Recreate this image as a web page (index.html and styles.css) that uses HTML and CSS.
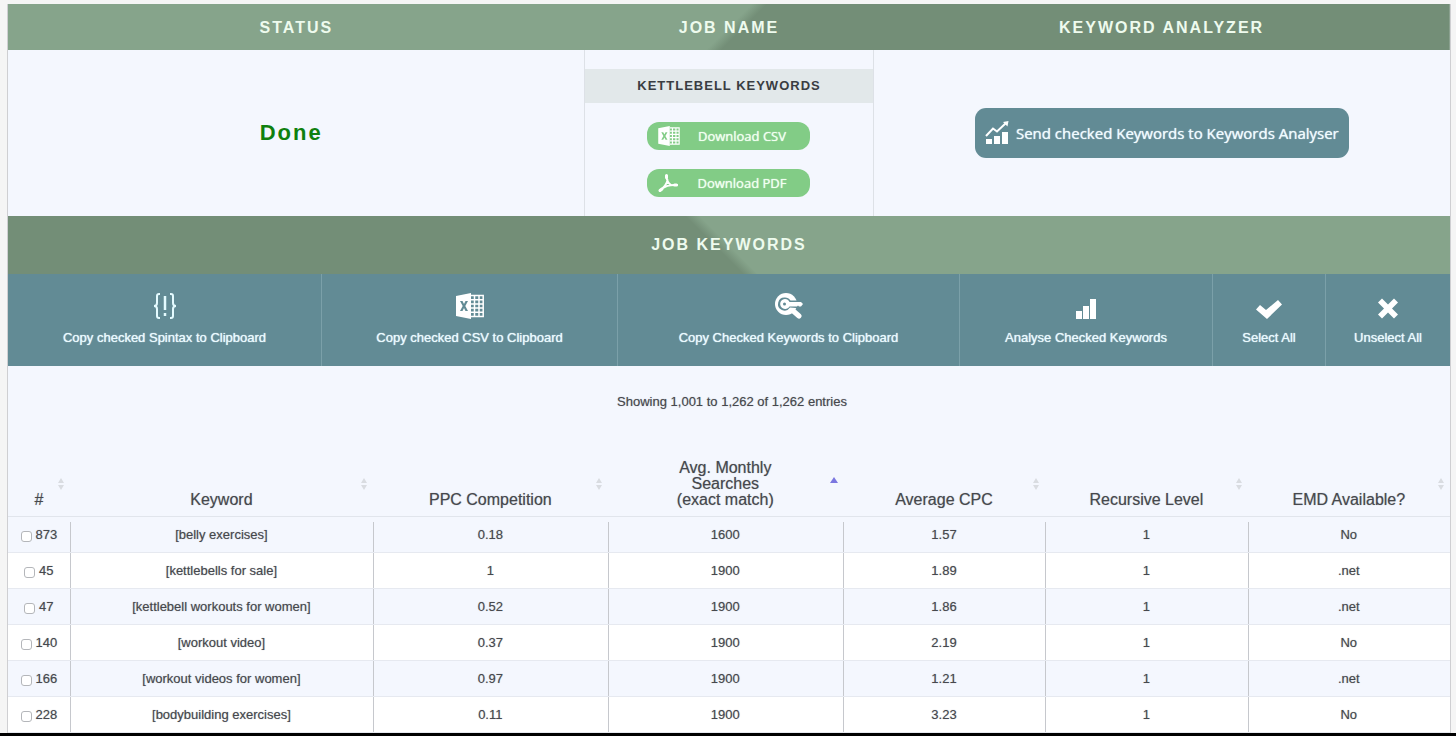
FILE: index.html
```html
<!DOCTYPE html>
<html lang="en">
<head>
  <meta charset="UTF-8" />
  <meta name="viewport" content="width=device-width, initial-scale=1.0"/>
  <title>Job Keywords</title>
  <link rel="stylesheet" href="styles.css">
</head>
<body>

  <!-- Shared icons -->
  <svg class="icon-defs" width="0" height="0" aria-hidden="true">
    <symbol id="icon-excel" viewBox="0 0 28 26">
      <path fill="#fff" fill-rule="evenodd" d="M0 3 15 0V26L0 23ZM4 8 6.700 13 4 18H6.500L8 15 9.500 18H12L9.300 13 12 8H9.500L8 11 6.500 8Z"/>
      <path fill="none" stroke="#fff" stroke-width="1.500" d="M15 2.500H27.200V23.500H15M15 6.700H27M15 10.900H27M15 15.100H27M15 19.300H27M18.500 3V23M23 3V23"/>
    </symbol>
    <symbol id="icon-sort" viewBox="0 0 8 14">
      <path fill="#d9dce1" d="M4 1 7 6H1ZM4 13 7 8H1Z"/>
    </symbol>
    <symbol id="icon-sort-asc" viewBox="0 0 8 14">
      <path fill="#7b77e0" d="M4 0 8 6H0Z"/>
    </symbol>
  </svg>

  <main class="panel">

    <!-- Job summary -->
    <table class="summary">
      <thead>
        <tr>
          <th class="col-status">Status</th>
          <th class="col-name">Job Name</th>
          <th class="col-analyzer">Keyword Analyzer</th>
        </tr>
      </thead>
      <tbody>
        <tr>
          <td class="status">Done</td>
          <td class="job">
            <h3>Kettlebell Keywords</h3>
            <button class="download-btn">
              <svg width="24" height="20"><use href="#icon-excel"/></svg>
              <span>Download CSV</span>
            </button>
            <button class="download-btn">
              <svg width="24" height="20" viewBox="0 0 24 20" fill="none" stroke="#fff" stroke-linecap="round" stroke-linejoin="round">
                <path stroke-width="3" d="M9.500 2.500V4.500M3 17.500 5 16M17.500 12H19.500"/>
                <path stroke-width="2" d="M9.500 3C9.500 7 11 10 14 12M10.500 7C10 11 6 15 3 17.500M5 15.500C9 12.500 14 11.500 20 12"/>
              </svg>
              <span>Download PDF</span>
            </button>
          </td>
          <td>
            <button class="send-btn">
              <svg width="24" height="24" viewBox="0 0 24 24">
                <path fill="#fff" d="M1 18H7V23H1ZM9 15H15V23H9ZM17 11H23V23H17Z"/>
                <path fill="none" stroke="#fff" stroke-width="2" d="M1 15 8 7.500 12 10.500 21 2"/>
                <path fill="#fff" d="M18 1 23.500 0 22.500 5.500Z"/>
              </svg>
              <span>Send checked Keywords to Keywords Analyser</span>
            </button>
          </td>
        </tr>
      </tbody>
    </table>

    <h2 class="section-title">Job Keywords</h2>

    <!-- Toolbar -->
    <div class="toolbar">
      <button>
        <svg width="24" height="26" viewBox="0 0 24 26" fill="none" stroke="#e4fbff" stroke-width="2">
          <path d="M7 1H6Q4 1 4 3V10Q4 13 1 13Q4 13 4 16V23Q4 25 6 25H7M17 1H18Q20 1 20 3V10Q20 13 23 13Q20 13 20 16V23Q20 25 18 25H17"/>
          <path stroke-width="2.500" d="M12 3V17M12 20V23"/>
        </svg>
        <span>Copy checked Spintax to Clipboard</span>
      </button>
      <button>
        <svg width="28" height="26"><use href="#icon-excel"/></svg>
        <span>Copy checked CSV to Clipboard</span>
      </button>
      <button>
        <!-- magnifier with a key laid over the lens -->
        <svg width="28" height="26" viewBox="0 0 28 26">
          <circle cx="11" cy="11" r="11" fill="#fff"/>
          <path stroke="#fff" stroke-width="5" stroke-linecap="round" d="M16 16 24 23"/>
          <path fill="#628b95" d="M10 4.500A6.500 6.500 0 0 1 15.500 7.500H28V15H21L15 14.500A6.500 6.500 0 1 1 10 4.500Z"/>
          <path fill="#fff" fill-rule="evenodd" d="M10 6A5 5 0 0 1 14.500 9H26L28 11 26 13.500H24L23 12.500 22 13.500H14.500A5 5 0 1 1 10 6ZM9.500 9.500A1.500 1.500 0 1 0 9.500 12.500A1.500 1.500 0 1 0 9.500 9.500Z"/>
        </svg>
        <span>Copy Checked Keywords to Clipboard</span>
      </button>
      <button>
        <svg width="20" height="26" viewBox="0 0 20 26">
          <path fill="#fff" d="M0 18H6V26H0ZM7 13H13V26H7ZM14 6H20V26H14Z"/>
        </svg>
        <span>Analyse Checked Keywords</span>
      </button>
      <button>
        <svg width="26" height="26" viewBox="0 0 26 26">
          <path fill="#fff" d="M4 12 10 17 22 7 26 11.500 11 26 0 16.500Z"/>
        </svg>
        <span>Select All</span>
      </button>
      <button>
        <svg width="22" height="26" viewBox="0 0 22 26">
          <path fill="#fff" d="M5 5.500 11 11.500 17 5.500 21 9.500 15 15.500 21 21.500 17 25.500 11 19.500 5 25.500 1 21.500 7 15.500 1 9.500Z"/>
        </svg>
        <span>Unselect All</span>
      </button>
    </div>

    <p class="table-info">Showing 1,001 to 1,262 of 1,262 entries</p>

    <!-- Keywords table -->
    <table class="keywords">
      <colgroup>
        <col class="c-id"><col class="c-keyword"><col class="c-wide"><col class="c-wide"><col><col><col>
      </colgroup>
      <thead>
        <tr>
          <th><button><span>#</span><svg><use href="#icon-sort"/></svg></button></th>
          <th><button><span>Keyword</span><svg><use href="#icon-sort"/></svg></button></th>
          <th><button><span>PPC Competition</span><svg><use href="#icon-sort"/></svg></button></th>
          <th><button><span>Avg. Monthly<br>Searches<br>(exact match)</span><svg><use href="#icon-sort-asc"/></svg></button></th>
          <th><button><span>Average CPC</span><svg><use href="#icon-sort"/></svg></button></th>
          <th><button><span>Recursive Level</span><svg><use href="#icon-sort"/></svg></button></th>
          <th><button><span>EMD Available?</span><svg><use href="#icon-sort"/></svg></button></th>
        </tr>
      </thead>
      <tbody>
        <tr>
          <td><label><input type="checkbox"> 873</label></td>
          <td>[belly exercises]</td>
          <td>0.18</td>
          <td>1600</td>
          <td>1.57</td>
          <td>1</td>
          <td>No</td>
        </tr>
        <tr>
          <td><label><input type="checkbox"> 45</label></td>
          <td>[kettlebells for sale]</td>
          <td>1</td>
          <td>1900</td>
          <td>1.89</td>
          <td>1</td>
          <td>.net</td>
        </tr>
        <tr>
          <td><label><input type="checkbox"> 47</label></td>
          <td>[kettlebell workouts for women]</td>
          <td>0.52</td>
          <td>1900</td>
          <td>1.86</td>
          <td>1</td>
          <td>.net</td>
        </tr>
        <tr>
          <td><label><input type="checkbox"> 140</label></td>
          <td>[workout video]</td>
          <td>0.37</td>
          <td>1900</td>
          <td>2.19</td>
          <td>1</td>
          <td>No</td>
        </tr>
        <tr>
          <td><label><input type="checkbox"> 166</label></td>
          <td>[workout videos for women]</td>
          <td>0.97</td>
          <td>1900</td>
          <td>1.21</td>
          <td>1</td>
          <td>.net</td>
        </tr>
        <tr>
          <td><label><input type="checkbox"> 228</label></td>
          <td>[bodybuilding exercises]</td>
          <td>0.11</td>
          <td>1900</td>
          <td>3.23</td>
          <td>1</td>
          <td>No</td>
        </tr>
      </tbody>
    </table>

  </main>

  <div class="bottom-bar"></div>

</body>
</html>
```
FILE: styles.css
```css
/* Reset & Base */
* {
  box-sizing: border-box;
  margin: 0;
  padding: 0;
}

body {
  font-family: "Liberation Sans", Arial, sans-serif;
  font-size: 13px;
  line-height: 16px;
  color: #46484d;
  background-color: #f5f5f5;
  padding-top: 4px;
}

button {
  border: none;
  background: none;
  color: inherit;
  font: inherit;
  cursor: pointer;
}

table {
  width: 100%;
  border-collapse: collapse;
  table-layout: fixed;
}

.icon-defs {
  display: block;
}

.panel {
  margin: 0 5px 0 7px;
  border-left: 1px solid #cfcfd2;
  border-right: 1px solid #cfcfd2;
  background-color: #f4f7fe;
}

/* Summary */
.summary thead tr {
  background: linear-gradient(135deg, #86a48b 50%, #738e77 51%);
}

.summary th {
  height: 46px;
  padding-top: 2px;
  font-size: 16px;
  letter-spacing: 2px;
  text-transform: uppercase;
  color: #eefbee;
}

.col-status,
.col-analyzer {
  width: 40%;
}

.col-name {
  width: 20%;
}

.summary td {
  height: 166px;
  text-align: center;
}

.summary .status {
  padding-right: 10px;
  font-size: 22px;
  font-weight: bold;
  letter-spacing: 2px;
  color: #0f800f;
}

.summary .job {
  border-left: 1px solid #dde1e7;
  border-right: 1px solid #dde1e7;
}

.job h3 {
  margin-bottom: 19px;
  font-size: 13px;
  line-height: 34px;
  letter-spacing: 1px;
  text-transform: uppercase;
  color: #3a3d42;
  background-color: #e2e8ea;
}

.download-btn {
  display: flex;
  align-items: center;
  width: 163px;
  height: 28px;
  margin: 0 auto;
  padding: 0 10px;
  border-radius: 12px;
  font-family: "Open Sans", sans-serif;
  font-weight: 500;
  color: #f1fff1;
  text-shadow: 0 0 1px #f1fff1;
  background-color: #82cc86;
}

.download-btn + .download-btn {
  margin-top: 19px;
}

.download-btn span {
  flex: 1;
  padding-left: 2px;
}

.send-btn {
  display: inline-flex;
  align-items: center;
  gap: 7px;
  height: 50px;
  padding: 0 10px;
  border-radius: 11px;
  font-family: "Open Sans", sans-serif;
  font-size: 15px;
  color: #f0fbff;
  text-shadow: 0 0 1px #f0fbff;
  background-color: #628b95;
}

/* Section title */
.section-title {
  font-size: 16px;
  line-height: 58px;
  letter-spacing: 2px;
  text-align: center;
  text-transform: uppercase;
  color: #eefbee;
  background: linear-gradient(45deg, #738e77 49%, #86a48b 50%);
}

/* Toolbar */
.toolbar {
  display: grid;
  grid-template-columns: 313fr 296fr 342fr 253fr 113fr 125fr;
  background-color: #628b95;
}

.toolbar button {
  display: flex;
  flex-direction: column;
  align-items: center;
  gap: 11px;
  padding: 19px 0 20px;
  color: #eafaff;
  text-shadow: 0 0 1px #eafaff;
}

.toolbar button + button {
  border-left: 1px solid #7ba0a9;
}

/* Keywords table */
.table-info {
  padding: 28px 0 48px 6px;
  text-align: center;
  text-shadow: 0 0 1px #a0a2a8;
}

.c-id {
  width: 62px;
}

.c-keyword {
  width: 21%;
}

.c-wide {
  width: 235px;
}

.keywords {
  text-shadow: 0 0 1px #a0a2a8;
}

.keywords th {
  height: 58px;
  border-bottom: 1px solid #e1e5ec;
  font-size: 16px;
  font-weight: normal;
  vertical-align: bottom;
}

.keywords th button {
  display: grid;
  align-items: end;
  width: 100%;
  padding-bottom: 8px;
  text-shadow: inherit;
}

.keywords th span,
.keywords th svg {
  grid-area: 1 / 1;
}

.keywords th svg {
  justify-self: end;
  width: 8px;
  height: 14px;
  margin: 0 5px 17px 0;
}

.keywords td {
  height: 36px;
  padding-top: 1px;
  border-bottom: 1px solid #e6e9f0;
  text-align: center;
}

.keywords tbody tr:nth-child(even) {
  background-color: #fff;
}

/* Column rules, starting a little below the header line */
.keywords td + td {
  background: linear-gradient(#c6c8cd, #c6c8cd) no-repeat left bottom / 1px 100%;
}

.keywords tr:first-child td + td {
  background-size: 1px 30px;
}

.keywords input {
  appearance: none;
  width: 11px;
  height: 11px;
  border: 1px solid #b4b6ba;
  border-radius: 3px;
  background-color: #fff;
  vertical-align: -3px;
}

.bottom-bar {
  height: 3px;
  background-color: #000;
}
```
